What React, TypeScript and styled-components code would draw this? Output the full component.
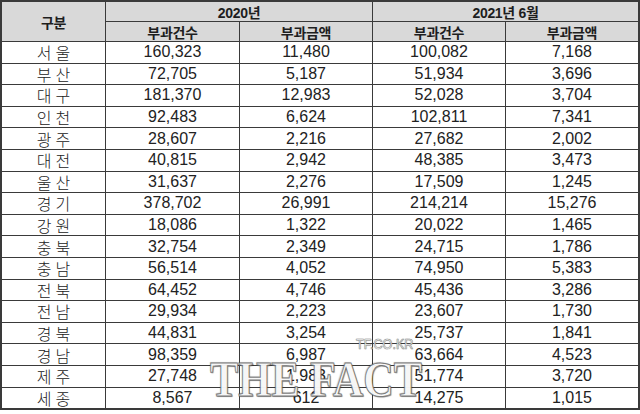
import styled, { createGlobalStyle } from "styled-components";

const GlobalStyle = createGlobalStyle`
  html, body {
    margin: 0;
    padding: 0;
    background: #fff;
  }
  body {
    font-family: "Liberation Sans", "Noto Sans CJK KR", sans-serif;
    color: #222;
  }
`;

type Row = [string, string, string, string, string];

const rows: Row[] = [
  ["서울", "160,323", "11,480", "100,082", "7,168"],
  ["부산", "72,705", "5,187", "51,934", "3,696"],
  ["대구", "181,370", "12,983", "52,028", "3,704"],
  ["인천", "92,483", "6,624", "102,811", "7,341"],
  ["광주", "28,607", "2,216", "27,682", "2,002"],
  ["대전", "40,815", "2,942", "48,385", "3,473"],
  ["울산", "31,637", "2,276", "17,509", "1,245"],
  ["경기", "378,702", "26,991", "214,214", "15,276"],
  ["강원", "18,086", "1,322", "20,022", "1,465"],
  ["충북", "32,754", "2,349", "24,715", "1,786"],
  ["충남", "56,514", "4,052", "74,950", "5,383"],
  ["전북", "64,452", "4,746", "45,436", "3,286"],
  ["전남", "29,934", "2,223", "23,607", "1,730"],
  ["경북", "44,831", "3,254", "25,737", "1,841"],
  ["경남", "98,359", "6,987", "63,664", "4,523"],
  ["제주", "27,748", "1,983", "51,774", "3,720"],
  ["세종", "8,567", "612", "14,275", "1,015"],
];

const Page = styled.div`
  position: relative;
  width: 640px;
  height: 414px;
  overflow: hidden;
`;

const Grid = styled.div`
  display: grid;
  grid-template-columns: 103px 133px 132px 132px 132px;
  grid-template-rows: 19px 19px repeat(17, 20.6px);
  gap: 1px;
  background: #3a3a3a;
  border: 2px solid #3a3a3a;
  width: 636px;
`;

const HeadCell = styled.div<{ $col?: string; $row?: string }>`
  grid-column: ${(p) => p.$col ?? "auto"};
  grid-row: ${(p) => p.$row ?? "auto"};
  background: #d9d9d9;
  display: flex;
  align-items: center;
  justify-content: center;
  font-size: 14px;
  font-weight: 700;
  color: #1e1e1e;
  letter-spacing: -0.3px;
`;

const RegionCell = styled.div`
  background: #fff;
  display: flex;
  align-items: center;
  justify-content: center;
  font-family: "Noto Sans CJK KR", sans-serif;
  font-weight: 300;
  font-size: 16px;
  letter-spacing: 4px;
  padding-left: 4px;
  color: #222;
`;

const NumCell = styled.div`
  background: #fff;
  display: flex;
  align-items: center;
  justify-content: center;
  font-size: 16px;
  color: #222;
`;

const Mark = styled.div`
  position: absolute;
  left: 210px;
  top: 354px;
  font-family: "Liberation Serif", serif;
  font-weight: 700;
  font-size: 51px;
  line-height: 51px;
  white-space: nowrap;
  color: rgba(255, 255, 255, 0.95);
  transform: scaleX(0.83);
  transform-origin: left top;
  -webkit-text-stroke: 1px rgba(110, 110, 110, 0.9);
  text-shadow: 1px 1px 1px rgba(0, 0, 0, 0.45), -1px -1px 1px rgba(0, 0, 0, 0.2);
  pointer-events: none;
`;

const Site = styled.div`
  position: absolute;
  left: 356px;
  top: 337px;
  font-family: "Liberation Sans", sans-serif;
  font-size: 14px;
  line-height: 14px;
  white-space: nowrap;
  color: rgba(255, 255, 255, 0.95);
  transform: scaleX(0.9);
  transform-origin: left top;
  -webkit-text-stroke: 0.5px rgba(120, 120, 120, 0.8);
  text-shadow: 0 0 1px rgba(80, 80, 80, 0.8);
  pointer-events: none;
`;

export default function App() {
  return (
    <Page>
      <GlobalStyle />
      <Grid>
        <HeadCell $row="1 / span 2">구분</HeadCell>
        <HeadCell $col="2 / span 2">2020년</HeadCell>
        <HeadCell $col="4 / span 2">2021년 6월</HeadCell>
        <HeadCell>부과건수</HeadCell>
        <HeadCell>부과금액</HeadCell>
        <HeadCell>부과건수</HeadCell>
        <HeadCell>부과금액</HeadCell>
        {rows.map((r) => [
          <RegionCell key={r[0]}>{r[0]}</RegionCell>,
          ...r.slice(1).map((v, i) => <NumCell key={r[0] + i}>{v}</NumCell>),
        ])}
      </Grid>
      <Site>TF.CO.KR</Site>
      <Mark>THE FACT</Mark>
    </Page>
  );
}
